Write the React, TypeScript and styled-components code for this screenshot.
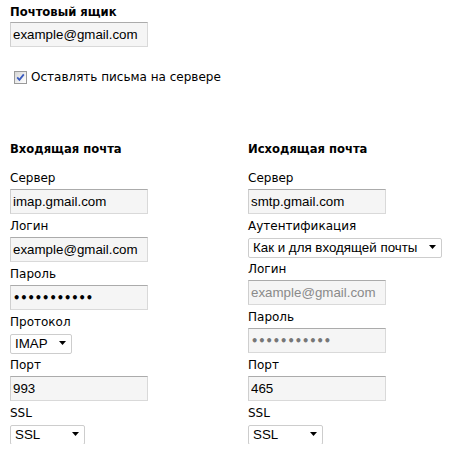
import React from "react";
import styled, { createGlobalStyle } from "styled-components";

const GlobalStyle = createGlobalStyle`
  html, body { margin: 0; padding: 0; background: #ffffff; }
  body { font-family: "DejaVu Sans", Verdana, sans-serif; color: #000; }
`;

const Page = styled.div`
  padding: 5px 0 0 10px;
  display: flex;
  flex-direction: column;
  align-items: flex-start;
`;

const Title = styled.div<{ $gap: number }>`
  font-family: "DejaVu Sans", Verdana, sans-serif;
  font-weight: bold;
  font-size: 11.6px;
  line-height: 15px;
  margin-bottom: ${(p) => p.$gap}px;
`;

const TextInput = styled.input`
  display: block;
  box-sizing: border-box;
  width: 138px;
  height: 25px;
  margin: 0;
  padding: 0 2px;
  border: 1px solid #d9d9d9;
  border-top-color: #ababab;
  border-left-color: #cfcfcf;
  border-radius: 0;
  background: #f5f5f5;
  font-family: "Liberation Sans", Arial, sans-serif;
  font-size: 13.33px;
  color: #000;
  outline: none;
  &:disabled {
    color: #8a8a8a;
    -webkit-text-fill-color: #8a8a8a;
    opacity: 1;
  }
  &[type="password"] {
    font-family: "DejaVu Sans", Verdana, sans-serif;
    font-size: 11.4px;
    font-weight: bold;
    letter-spacing: 0;
  }
  &[type="password"]:disabled {
    color: #777;
    -webkit-text-fill-color: #777;
  }
`;

const CheckRow = styled.label`
  display: flex;
  align-items: center;
  height: 19px;
  margin-top: 21px;
  font-size: 12px;
  line-height: 15px;
`;

const CheckBox = styled.span`
  box-sizing: border-box;
  width: 13px;
  height: 13px;
  margin: 0 4px 1px 4px;
  border: 1px solid #9a9a9a;
  background: linear-gradient(135deg, #d6d6d6 0%, #f4f4f4 70%, #ffffff 100%);
  display: flex;
  align-items: center;
  justify-content: center;
`;

const Columns = styled.div`
  display: grid;
  grid-template-columns: 238px 200px;
  margin-top: 55px;
`;

const Column = styled.div`
  display: flex;
  flex-direction: column;
  align-items: flex-start;
`;

const FieldLabel = styled.div`
  font-size: 12px;
  font-weight: normal;
  line-height: 15px;
  padding: 5px 0 3px;
`;

const SelectWrap = styled.div<{ $w: number }>`
  position: relative;
  width: ${(p) => p.$w}px;
  height: 20px;
`;

const Select = styled.select`
  appearance: none;
  -webkit-appearance: none;
  box-sizing: border-box;
  width: 100%;
  height: 20px;
  margin: 0;
  padding: 0 16px 0 4px;
  border: 1px solid #cdcdcd;
  border-radius: 2px;
  background: #ffffff;
  font-family: "Liberation Sans", Arial, sans-serif;
  font-size: 13.33px;
  color: #000;
  outline: none;
`;

const Arrow = styled.svg`
  position: absolute;
  right: 6px;
  top: 8px;
  pointer-events: none;
`;

function Dropdown({ width, value }: { width: number; value: string }) {
  return (
    <SelectWrap $w={width}>
      <Select value={value} onChange={() => {}}>
        <option value={value}>{value}</option>
      </Select>
      <Arrow width="7" height="4" viewBox="0 0 7 4">
        <path d="M0 0 H7 L3.5 4 Z" fill="#000" />
      </Arrow>
    </SelectWrap>
  );
}

function Field({ label, children }: { label: string; children: React.ReactNode }) {
  return (
    <>
      <FieldLabel>{label}</FieldLabel>
      {children}
    </>
  );
}

export default function App() {
  return (
    <>
      <GlobalStyle />
      <Page>
        <Title $gap={2}>Почтовый ящик</Title>
        <TextInput readOnly value="example@gmail.com" />
        <CheckRow>
          <CheckBox>
            <svg width="9" height="9" viewBox="0 0 9 9">
              <path d="M1.2 4.4 L3.4 6.8 L7.8 1.4" stroke="#3a5bbf" strokeWidth="1.8" fill="none" />
            </svg>
          </CheckBox>
          Оставлять письма на сервере
        </CheckRow>
        <Columns>
          <Column>
            <Title $gap={9}>Входящая почта</Title>
            <Field label="Сервер">
              <TextInput readOnly value="imap.gmail.com" />
            </Field>
            <Field label="Логин">
              <TextInput readOnly value="example@gmail.com" />
            </Field>
            <Field label="Пароль">
              <TextInput readOnly type="password" value="12345678901" />
            </Field>
            <Field label="Протокол">
              <Dropdown width={62} value="IMAP" />
            </Field>
            <Field label="Порт">
              <TextInput readOnly value="993" />
            </Field>
            <Field label="SSL">
              <Dropdown width={75} value="SSL" />
            </Field>
          </Column>
          <Column>
            <Title $gap={9}>Исходящая почта</Title>
            <Field label="Сервер">
              <TextInput readOnly value="smtp.gmail.com" />
            </Field>
            <Field label="Аутентификация">
              <Dropdown width={194} value="Как и для входящей почты" />
            </Field>
            <Field label="Логин">
              <TextInput disabled value="example@gmail.com" />
            </Field>
            <Field label="Пароль">
              <TextInput disabled type="password" value="12345678901" />
            </Field>
            <Field label="Порт">
              <TextInput readOnly value="465" />
            </Field>
            <Field label="SSL">
              <Dropdown width={75} value="SSL" />
            </Field>
          </Column>
        </Columns>
      </Page>
    </>
  );
}
